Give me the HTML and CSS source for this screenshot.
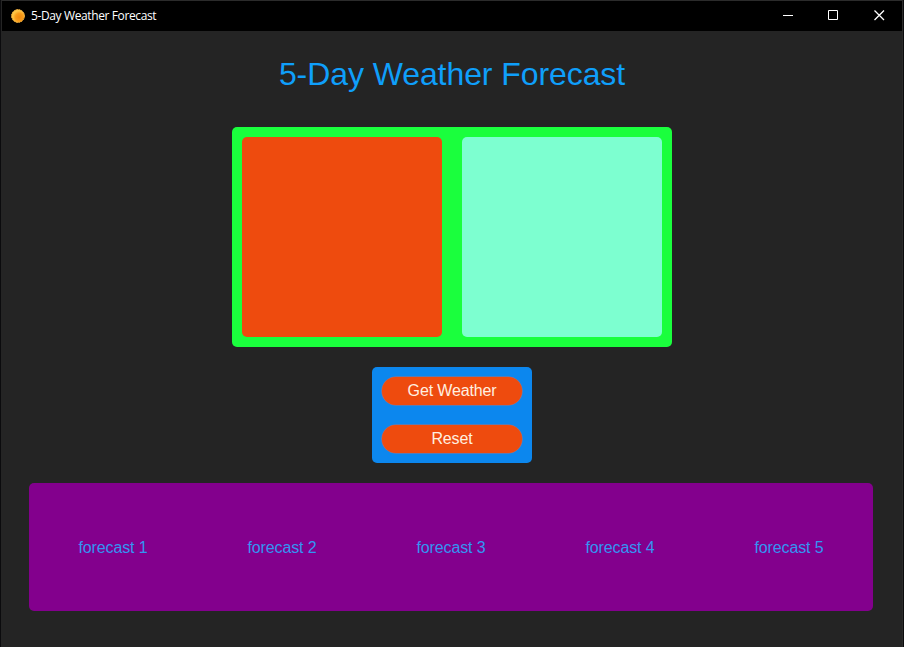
FILE: index.html
```html
<!DOCTYPE html>
<html lang="en">
<head>
<meta charset="utf-8">
<title>5-Day Weather Forecast</title>
<link rel="stylesheet" href="styles.css">
</head>
<body>
<div class="window">
  <header class="titlebar">
    <svg class="app-icon" width="16" height="16" viewBox="0 0 16 16">
      <defs><radialGradient id="sun" cx=".6" cy=".6"><stop offset="0" stop-color="#f08a10"/><stop offset=".6" stop-color="#f99c1a"/><stop offset="1" stop-color="#ffc545"/></radialGradient></defs>
      <circle cx="8" cy="8" r="6.5" fill="url(#sun)" stroke="#f3b040" stroke-width="1" stroke-dasharray="1.7 .85"/>
    </svg>
    <span class="caption">5-Day Weather Forecast</span>
    <div class="controls">
      <svg width="46" height="30" viewBox="0 0 46 30"><path d="M18 14.5h10"/></svg>
      <svg width="46" height="30" viewBox="0 0 46 30"><path d="M17.5 9.5h9v9h-9z"/></svg>
      <svg width="46" height="30" viewBox="0 0 46 30"><path stroke-width="1.3" d="M17.5 9.5l9.5 9.5M27 9.5l-9.5 9.5"/></svg>
    </div>
  </header>
  <main class="content">
    <h1 class="title">5-Day Weather Forecast</h1>
    <section class="today">
      <div class="tile tile-orange"></div>
      <div class="tile tile-mint"></div>
    </section>
    <section class="actions">
      <button class="btn">Get Weather</button>
      <button class="btn">Reset</button>
    </section>
    <section class="forecast">
      <div>forecast 1</div>
      <div>forecast 2</div>
      <div>forecast 3</div>
      <div>forecast 4</div>
      <div>forecast 5</div>
    </section>
  </main>
</div>
</body>
</html>
```
FILE: styles.css
```css
* { box-sizing: border-box; }
body {
  margin: 0;
  background: #0b0b0d;
  font-family: "Liberation Sans", Arial, sans-serif;
}
.window {
  height: 647px;
  display: flex;
  flex-direction: column;
  border: solid #2b2b2b;
  border-width: 1px 1px 0 0;
  margin: 0 1px;
  border-left: 1px solid #242424;
  background: #242424;
}
.titlebar {
  height: 30px;
  flex: none;
  display: flex;
  align-items: center;
  padding-left: 8px;
  background: #000;
}
.app-icon { flex: none; margin-top: -1px; }
.caption {
  margin-left: 5px;
  color: #fff;
  font: 12px/16px "Open Sans", "Noto Sans", sans-serif;
  letter-spacing: -0.38px;
}
.controls { display: flex; margin-left: auto; margin-right: -1px; }
.controls svg { fill: none; stroke: #fff; stroke-width: 1; }
.content {
  flex: 1;
  display: flex;
  flex-direction: column;
  align-items: center;
}
.title {
  margin: 24px 0 34px;
  height: 38px;
  line-height: 38px;
  font-size: 32px;
  font-weight: 400;
  letter-spacing: -0.08px;
  color: #0f9ffa;
}
.today {
  display: flex;
  gap: 20px;
  padding: 10px;
  border-radius: 5px;
  background: #1aff3d;
}
.tile { width: 200px; height: 200px; border-radius: 5px; }
.tile-orange { background: #ee4b0e; }
.tile-mint { background: #7dffd0; }
.actions {
  display: flex;
  flex-direction: column;
  gap: 20px;
  margin: 20px 0;
  padding: 10px;
  border-radius: 5px;
  background: #0c87ee;
}
.btn {
  width: 140px;
  height: 28px;
  padding: 0;
  border: 0;
  box-shadow: 0 0 0 0.6px #a87078;
  border-radius: 14px;
  background: #ee4b0e;
  color: #fff0e0;
  font: 16px/28px "Liberation Sans", Arial, sans-serif;
  letter-spacing: -0.15px;
}
.forecast {
  width: 844px;
  height: 128px;
  margin-right: 2px;
  padding-top: 2px;
  display: grid;
  grid-template-columns: repeat(5, 169px);
  justify-content: center;
  align-items: center;
  border-radius: 5px;
  background: #83008d;
  color: #3494f2;
  font-size: 16px;
  letter-spacing: -0.12px;
  text-align: center;
}
```
